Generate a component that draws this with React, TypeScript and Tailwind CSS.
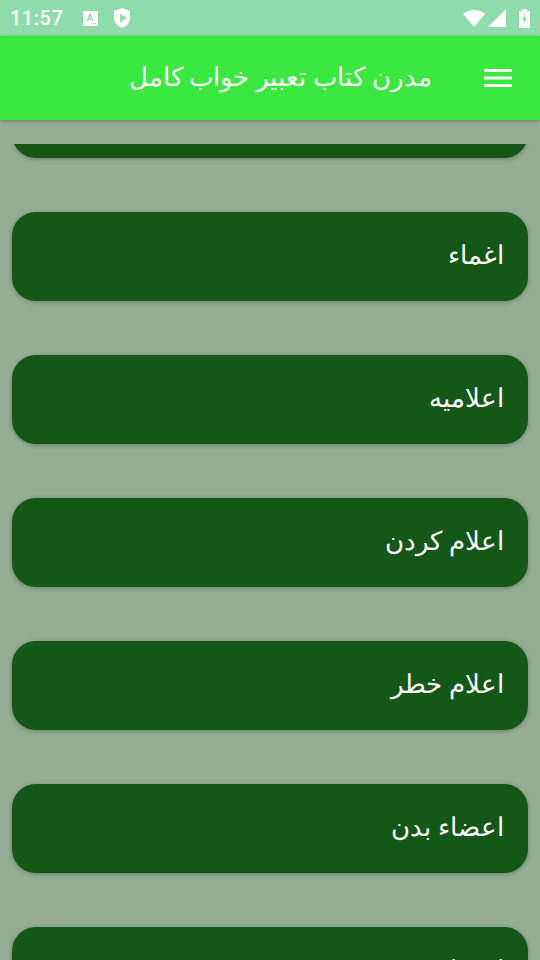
const ITEMS = ["", "اغماء", "اعلامیه", "اعلام کردن", "اعلام خطر", "اعضاء بدن", "اعضا"];

function StatusBar() {
  return (
    <div className="h-9 shrink-0 bg-[#8ddcaa] flex items-center px-[10px] text-white">
      <span className="text-[20px] font-medium tracking-[0.5px] font-['Roboto',sans-serif]">11:57</span>
      <svg width="15" height="15" viewBox="0 0 15 15" className="ml-[20px]">
        <rect width="15" height="15" rx="1" fill="#fff" />
        <path d="M6.400 2.500 3.800 10h1.500l.5-1.500h2.400l.5 1.500h1.500L7.900 2.500zM6.200 7.200l.9-2.700.9 2.700z" fill="#8ddcaa" />
        <path d="M8 12h1v1H8zM10 12h1v1h-1zM12 12h1v1h-1z" fill="#8ddcaa" />
      </svg>
      <svg width="16" height="20" viewBox="0 0 16 20" className="ml-[16px]">
        <path d="M8 0 16 3V9.500c0 4.800-3.300 8.800-8 10.500C3.300 18.300 0 14.300 0 9.500V3z" fill="#fff" />
        <path d="M6 5.500 12.500 10 6 14.500z" fill="#8ddcaa" />
      </svg>
      <div className="ml-auto flex items-center">
        <svg width="22" height="17" viewBox="0 0 22 17">
          <path d="M0 4C3 1.500 6.800 0 11 0s8 1.500 11 4L11 17z" fill="#fff" />
        </svg>
        <svg width="18" height="18" viewBox="0 0 18 18" className="ml-[3px]">
          <path d="M18 0V18H0z" fill="#fff" />
        </svg>
        <svg width="11" height="19" viewBox="0 0 11 19" className="ml-[13px] mr-[0px]">
          <path d="M3 0h5v2h3v17H0V2h3z" fill="#fff" />
          <path d="M6.500 4 3 11h2.300l-1 5L8 9H5.700z" fill="#8ddcaa" />
        </svg>
      </div>
    </div>
  );
}

export default function App() {
  return (
    <div className="w-[540px] h-[960px] flex flex-col overflow-hidden bg-[#93ae94] font-['Noto_Sans','DejaVu_Sans',sans-serif]">
      <StatusBar />
      <div className="relative z-10 h-[84px] shrink-0 bg-[#3ae83f] shadow-[0_1px_4px_rgba(0,0,0,0.3)] flex items-center justify-end text-white">
        <span dir="rtl" className="text-[26.4px] font-light leading-none mb-1">مدرن کتاب تعبیر خواب کامل</span>
        <svg width="28" height="18" viewBox="0 0 28 18" className="ml-[52px] mr-[28px]">
          <path d="M0 0h28v3H0zM0 7.500h28v3H0zM0 15h28v3H0z" fill="#fff" />
        </svg>
      </div>
      {/* list is scrolled, first card cut off at the top */}
      <div className="mt-6 flex-1 overflow-hidden px-3">
        <div className="-mt-[75px] flex flex-col gap-[54px] pb-4">
          {ITEMS.map((item, i) => (
            <div
              key={i}
              dir="rtl"
              className="h-[89px] shrink-0 rounded-[24px] bg-[#145716] shadow-[0_1px_4px_rgba(0,0,0,0.3)] flex items-center px-6 pb-1 text-[26px] font-light text-white"
            >
              {item}
            </div>
          ))}
        </div>
      </div>
    </div>
  );
}
